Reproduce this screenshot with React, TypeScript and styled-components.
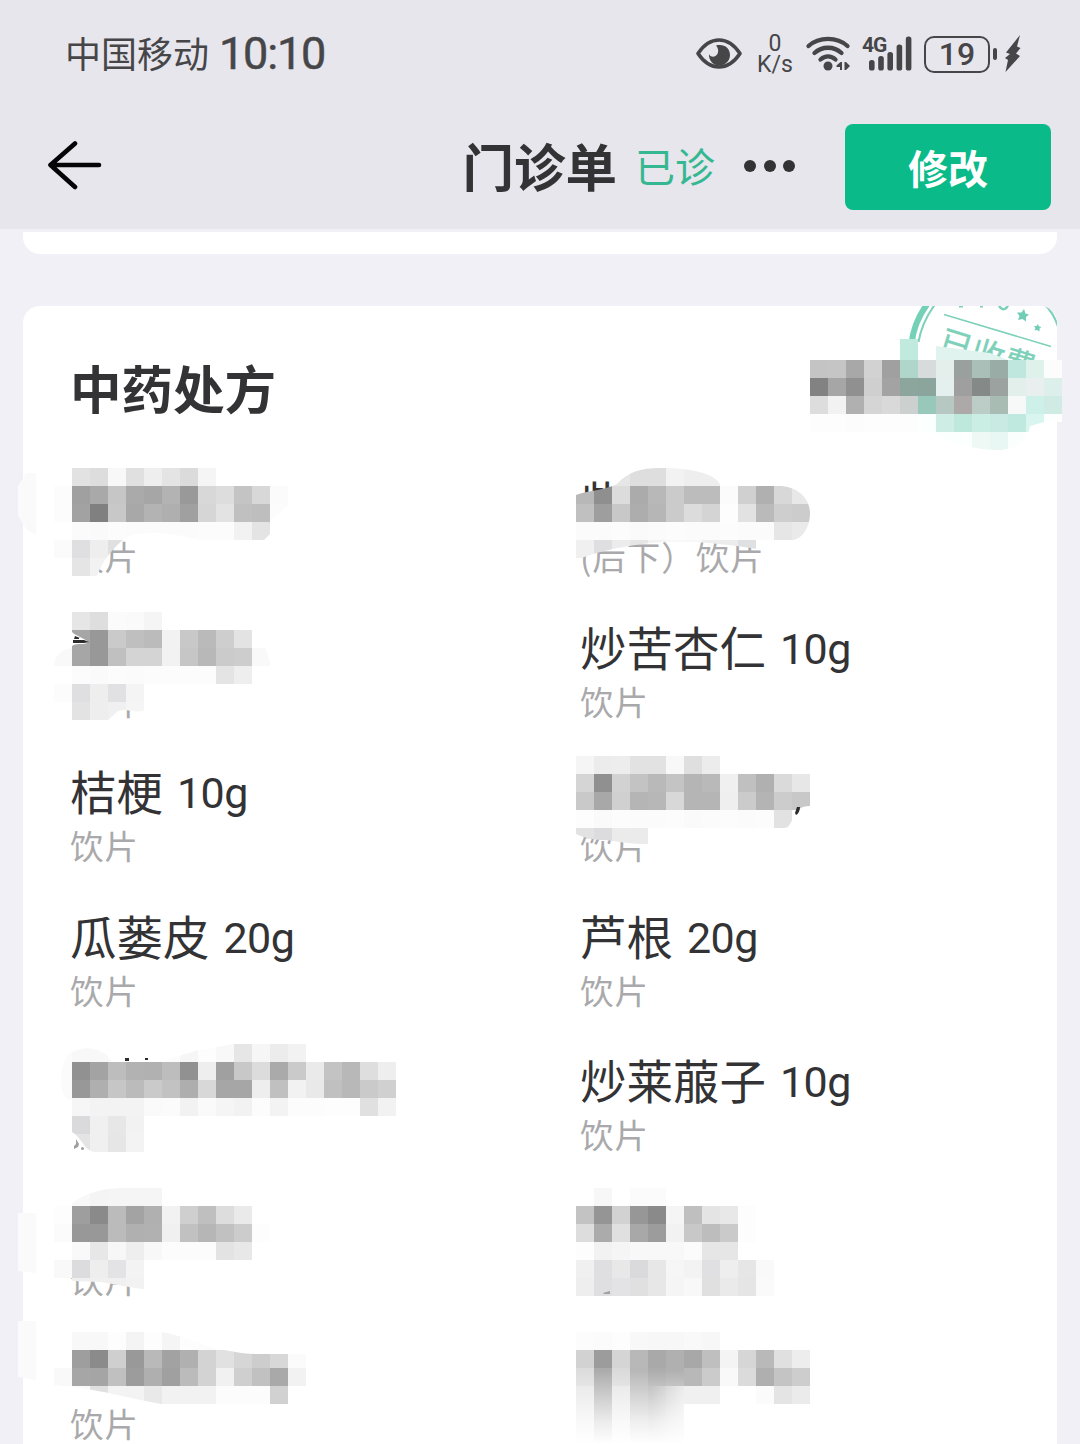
import styled, { createGlobalStyle } from 'styled-components';

type Herb = {
    name?: string;
    dose?: string;
    form?: string;
};

type Patch = {
    id: string;
    x: number;
    y: number;
    // one string per row, grey levels or full colours, "." leaves a hole
    rows: string[];
    clip?: string;
};

const CELL = 18;

const herbs: Herb[] = [
    { form: '饮片' },
    { name: '柴', form: '(后下）饮片' },
    { form: '饮片' },
    { name: '炒苦杏仁', dose: '10g', form: '饮片' },
    { name: '桔梗', dose: '10g', form: '饮片' },
    { form: '饮片' },
    { name: '瓜蒌皮', dose: '20g', form: '饮片' },
    { name: '芦根', dose: '20g', form: '饮片' },
    {},
    { name: '炒莱菔子', dose: '10g', form: '饮片' },
    { form: '饮片' },
    {},
    { form: '饮片' },
    {},
];

const patches: Patch[] = [
    {
        id: 'doctor',
        x: 810,
        y: 360,
        rows: [
            'c4 c5 a8 d2 a0 b0d6cb d8dbdb e4efec 9aa09d a9bfb7 9aaca6 c0e7dd dff1eb fc',
            '82 a6 90 cf a3 8da69d 8ca59c e4f0ed 9f 858a88 9ba29f e3efeb e9eeee ddefeb',
            'dd f2 b0 d5 d9 ccd0ce 98c8b9 b7c8c2 ada9a9 bccdc7 a8bcb4 f7f8f8 cdf1e8 d0ebe4',
            'fd fd fc fd fd fd fbfffd ceeee5 bfe8dd caede4 c8eae2 bfe8df d8f5ef fdfffe',
            '. . . . . . . fbfffd fbfffd eef9f5 e8f7f3 fafffd . .',
        ],
        clip: 'M810 360H1062V422H1044L1030 426C1028 440 1018 450 996 450C970 449 950 443 936 432H810Z',
    },
    {
        id: 'a1',
        x: 54,
        y: 468,
        rows: [
            '. e2 dd f8 e0 ee e4 db f5',
            'fc a0 a9 c6 aa a6 b3 99 d8 dd c4 d8 fb',
            'fc a2 80 c8 a8 b3 af a0 d6 e3 c0 be fc',
            '. fb fa fc fb fb fb fb fc fc f2 e4',
            'fb dfdfe1 ee e0',
            '. e5 f2',
        ],
        clip: 'M54 468H288V506L270 520V534L264 540H200C170 532 145 531 128 536C112 548 102 562 97 576H54Z',
    },
    {
        id: 'b1',
        x: 576,
        y: 468,
        rows: [
            '. . e6 de de f2 ee ee',
            'b8 8f dc ab b8 cb bc bc fb d0 b0 d8 e8',
            'c0 9e c8 ad b6 cb dc d4 fd e2 ba ce cc',
            'fb fb fc fa fb fc fb fb fc fb fb e6 ea',
            'f0 dfdfe1 ec e6 f3 f8 f8 ee ec dfe0e2',
        ],
        clip: 'M576 495C590 490 606 490 617 484C628 472 640 468 660 468C690 468 716 473 721 486H782C800 488 810 500 810 513C810 530 800 540 792 540H757V549C730 545 700 541 665 542C640 543 600 550 576 560Z',
    },
    {
        id: 'a2',
        x: 54,
        y: 612,
        rows: [
            '. e6 de fb fa f5',
            '. a6 98 ca bf bb f2 c8 ba ce e3',
            'f9 a6 98 c0 d4 d4 f2 c6 b8 cb cd f9',
            '. fc fa fc fb fc fc fc fc e4 ee',
            'fc dfdfe1 ee e1e1e3 f4',
            '. e3 ee f0 f5',
        ],
        clip: 'M72 612H252V648H266L271 666H252V690H144V711C130 713 128 708 118 711L108 720H72V706H54V666C54 656 62 649 72 648V646C78 642 84 646 88 642C84 638 76 636 72 632Z',
    },
    {
        id: 'b3',
        x: 576,
        y: 756,
        rows: [
            'f5 ec ed e2 e2 f8 df ec',
            'd5 90 d2 c3 b9 c4 b5 b9 f0 c0 b0 da e7',
            'c9 a8 d0 b5 b7 d8 b5 b5 ef cb b4 cc c8',
            'fd fa fc fb fb fc fa fb fc fb fc e2 .',
            'e2 dcdcde eb eb',
        ],
        clip: 'M576 756H720V774H810V806C800 806 797 810 793 818C790 825 788 828 784 828H648V844C630 844 620 842 606 840C594 840 585 838 576 834Z',
    },
    {
        id: 'a5',
        x: 72,
        y: 1044,
        rows: [
            'f8 f8 f8 . . fc f6 fd f8 e6 f6 ec f2',
            '91 a3 bd b2 b1 bd 91 ee a0 c8 dc aa ca ea c3 b8 de ee',
            '98 af c6 bb ca c2 ae d8 a6 a6 ee c0 f2 e9 c0 b8 ca d0',
            'f6 f3 f3 f3 fa fb f2 fa f5 f2 fc f3 fc fc fd fd e0 f2',
            'dadadc f0 e7 f2',
            'e4 f0 e6 f3',
        ],
        clip: 'M72 1052C84 1046 102 1046 112 1062H160L198 1050L234 1044H306V1062H396V1116H144V1152H94C84 1150 82 1138 72 1132Z',
    },
    {
        id: 'a6',
        x: 54,
        y: 1188,
        rows: [
            '. f8 f4 f5 f5 f5',
            'fd 9e 8a bb a3 b0 f2 cf bf dd ea',
            'fb 98 98 bb b0 b1 f0 c1 b6 c1 cc fd',
            '. f9 e7 f7 ee f8 fc fc fc e3 e8',
            'f9 dcdcde ee e3e3e5 f3',
            '. ef f0 f0 f2',
        ],
        clip: 'M54 1206H72V1203C90 1191 105 1188 126 1188H162V1206H270V1260H144V1289C130 1288 115 1284 100 1282L72 1281V1278H54Z',
    },
    {
        id: 'b6',
        x: 576,
        y: 1188,
        rows: [
            '. f7 . fb fb',
            'c3 95 d2 97 8a f5 bf e4 e8 fd',
            'dd ab e0 a8 9c f2 c8 bd ca fd',
            'fd f2 f5 f8 f8 f8 fb e6 e6 .',
            'f0 dfdfe2 e8 dadadc e7 f6 f3 e0e0e3 ee e6 f9',
            'ee dfdfe2 e3e3e6 e0 e7 f5 f8 e0 ea e5 fa',
        ],
    },
    {
        id: 'a7',
        x: 54,
        y: 1332,
        rows: [
            '. f8 f8 fd f4 fd f5 fd fc',
            '. 9e 8b cf 99 b9 a2 b0 d3 e1 d6 cd d8 fb',
            'f9 a6 a5 c0 9c af a0 bb d3 f1 cf c1 a9 f2',
            '. fa e0 f3 f3 e9 f2 f2 f2 fc fc fc d1 .',
        ],
        clip: 'M54 1332H162C185 1336 198 1344 214 1348C228 1350 238 1354 258 1354H306V1386H288V1404H162C135 1400 112 1392 72 1387L54 1385Z',
    },
    {
        id: 'b7',
        x: 576,
        y: 1332,
        rows: [
            'fc fb fd f8 f7 f7 f9 f7',
            'd2 9c d5 b8 a9 b0 a8 bf f4 d6 b9 e0 ed',
            'dc ab da b7 ac b0 b8 cb f9 db af c4 cd',
            '. . . . . . f0 f0 . . fb e4 eb',
        ],
    },
];

// the last block is dragged downwards until it fades out
const smear = ['e4', 'ab', 'e4', 'b7', 'b0', 'b6'];

const toColour = (value: string) =>
    value.length === 2 ? `#${value}${value}${value}` : `#${value}`;

const Mosaic = () => (
    <MosaicLayer viewBox="0 0 1080 1444" aria-hidden="true">
        <defs>
            {patches
                .filter((patch) => patch.clip)
                .map((patch) => (
                    <clipPath id={`clip-${patch.id}`} key={patch.id}>
                        <path d={patch.clip} />
                    </clipPath>
                ))}
            <linearGradient id="fade" x1="0" y1="0" x2="0" y2="1">
                <stop offset="0" stopColor="#fff" stopOpacity="0" />
                <stop offset="0.3" stopColor="#fff" stopOpacity="0.35" />
                <stop offset="0.7" stopColor="#fff" stopOpacity="0.78" />
                <stop offset="1" stopColor="#fff" />
            </linearGradient>
            <linearGradient id="side">
                <stop offset="0" stopColor="#fff" stopOpacity="0" />
                <stop offset="1" stopColor="#fff" stopOpacity="0.65" />
            </linearGradient>
        </defs>

        <path d="M18 486L26 473H36V535L27 530L18 516Z" fill="#fafafb" />
        <path d="M18 1213H36V1273L18 1271Z" fill="#fafafb" />
        <path d="M18 1321H36V1380L18 1377Z" fill="#fafafb" />
        <path
            d="M62 1090C58 1070 66 1054 72 1052V1100C66 1100 64 1096 62 1090Z"
            fill="#fbfbfb"
        />

        <rect x="900" y="339" width="18" height="21" fill="#c1eadf" />
        <path d="M936 346L990 353L1008 360H936Z" fill="#e1f3ee" />

        {patches.map((patch) => (
            <g
                key={patch.id}
                clipPath={patch.clip ? `url(#clip-${patch.id})` : undefined}
            >
                {patch.rows.map((row, r) =>
                    row.split(' ').map((value, c) =>
                        value === '.' ? null : (
                            <rect
                                key={`${r}-${c}`}
                                x={patch.x + c * CELL}
                                y={patch.y + r * CELL}
                                width={CELL}
                                height={CELL}
                                fill={toColour(value)}
                                shapeRendering="crispEdges"
                            />
                        ),
                    ),
                )}
            </g>
        ))}

        {smear.map((value, index) => (
            <rect
                key={index}
                x={576 + index * CELL}
                y={1386}
                width={CELL}
                height={58}
                fill={toColour(value)}
            />
        ))}
        <rect x="576" y="1370" width="108" height="74" fill="url(#fade)" />
        <rect x="652" y="1386" width="32" height="58" fill="url(#side)" />

        {/* strokes left uncovered at the patch edges */}
        <g fill="#2b2b2b">
            <path d="M75 636L80 638H79V639H74ZM73 640H84L89 642L84 643H73Z" />
            <path d="M797 807H800C800 811 798 814 796 815L795 813Z" />
            <rect x="125" y="1058" width="4" height="3" />
            <rect x="145" y="1058" width="3" height="2" />
        </g>
        <g fill="#a0a0a2">
            <path d="M76 1139L79 1144L78 1147L74 1149V1146L76 1144Z" />
            <circle cx="82.500" cy="1148.500" r="1.500" />
            <path d="M603 1293L610 1291V1294L604 1294Z" />
        </g>
    </MosaicLayer>
);

const BackIcon = () => (
    <svg width="56" height="50" viewBox="47 140 56 50" fill="none">
        <path
            d="M75 143.500L50.500 165L75 187M50.500 165H99"
            stroke="#050507"
            strokeWidth="4.600"
            strokeLinecap="round"
            strokeLinejoin="round"
        />
    </svg>
);

const EyeIcon = () => (
    <svg width="46" height="34" viewBox="696 37 46 34">
        <path
            d="M698 53.500C703 46 710 40 719 40C728 40 735 46 740 53.500C735 61 728 67 719 67C710 67 703 61 698 53.500Z"
            fill="none"
            stroke="#464649"
            strokeWidth="3.600"
            strokeLinejoin="round"
        />
        <path
            d="M716 45.500C724 43.500 730 48 730 55C730 61 725 65.500 719 65.500C713 65.500 708.500 60 709 54C710 56.500 713 57.500 715.500 56C719 54 719 48.500 716 45.500Z"
            fill="#464649"
        />
    </svg>
);

const WifiIcon = () => (
    <svg width="46" height="36" viewBox="805 36 46 36">
        <g
            fill="none"
            stroke="#464649"
            strokeWidth="4.300"
            strokeLinecap="round"
        >
            <path d="M808.500 46C819 36.500 837 36.500 847.500 46" />
            <path d="M814.500 53C822 46 834 46 841.500 53" />
            <path d="M820.500 59.500C825 55.500 831 55.500 835.500 59.500" />
        </g>
        <circle cx="828" cy="66" r="4.500" fill="#464649" />
        <path
            d="M842 62V70H840V67H836.500V65.500L840.500 62ZM844.500 62H846L850 66L846 70H844.500Z"
            fill="#464649"
        />
    </svg>
);

const SignalIcon = () => (
    <svg width="44" height="36" viewBox="869 36 44 36">
        {[60, 56, 52, 44.5, 36.5].map((top, index) => (
            <rect
                key={top}
                x={869 + index * 9.2}
                y={top}
                width="5.600"
                height={70.5 - top}
                rx="2.600"
                fill="#464649"
            />
        ))}
    </svg>
);

const BoltIcon = () => (
    <svg width="17" height="38" viewBox="1004 35 17 38">
        <path
            d="M1020 35L1006 52.500L1010 54L1005 58L1008 60L1005.500 72L1020 56L1016 53.500L1020.500 48L1017 46.500Z"
            fill="#464649"
        />
    </svg>
);

const Stamp = () => (
    <StampSvg viewBox="897 306 160 150">
        <g fill="none" stroke="#7dd0b9">
            <path
                d="M911.500 344C913 329 919 315 928 303"
                stroke="#74d0b7"
                strokeWidth="6"
            />
            <path d="M918.500 342C921 327 927 315 936 303" strokeWidth="2" />
            <path d="M1043 303C1049 308 1054 315 1058 326" strokeWidth="2.200" />
            <path d="M944 314.500L1051 346.500" strokeWidth="1.500" />
            <path d="M959 306.500H963M980 306.500H983" strokeWidth="2" />
            <path d="M999 305C1001 310.500 1006 310.500 1008 305" strokeWidth="2.500" />
        </g>
        <g fill="#6fceb4">
            <path d="M1024 309L1025.500 313.500L1029 314.500L1026 317L1026 321.500L1022.500 319L1018 320L1019.500 316L1017 312.500L1021.500 312.500Z" />
            <path d="M1038 324L1039 326.500L1041.500 327L1039.500 328.500L1039.500 331.500L1037 330L1034.500 330.500L1035.500 328L1034 326L1036.500 326Z" />
        </g>
        <StampText x="937" y="352" transform="rotate(17 937 352)">
            已收费
        </StampText>
    </StampSvg>
);

export default function App() {
    return (
        <Screen>
            <GlobalStyle />
            <StatusBar>
                <Carrier>中国移动</Carrier>
                <Clock>10:10</Clock>
                <StatusIcons>
                    <EyeIcon />
                    <Speed>
                        <span>0</span>
                        <span>K/s</span>
                    </Speed>
                    <WifiIcon />
                    <Signal>
                        <Network>4G</Network>
                        <SignalIcon />
                    </Signal>
                    <Battery>19</Battery>
                    <BatteryTip />
                    <BoltIcon />
                </StatusIcons>
            </StatusBar>
            <Header>
                <BackButton aria-label="返回">
                    <BackIcon />
                </BackButton>
                <Title>门诊单</Title>
                <VisitState>已诊</VisitState>
                <MoreButton aria-label="更多">
                    <Dot />
                    <Dot />
                    <Dot />
                </MoreButton>
                <EditButton>修改</EditButton>
            </Header>
            <PreviousCard />
            <Card>
                <Stamp />
                <CardTitle>中药处方</CardTitle>
                <HerbGrid>
                    {herbs.map((herb, index) => (
                        <HerbItem key={index}>
                            <HerbName>
                                {herb.name}
                                {herb.dose && <Dose>{herb.dose}</Dose>}
                            </HerbName>
                            <HerbForm>{herb.form}</HerbForm>
                        </HerbItem>
                    ))}
                </HerbGrid>
            </Card>
            <Mosaic />
        </Screen>
    );
}

const GlobalStyle = createGlobalStyle`
    * {
        box-sizing: border-box;
    }
    body {
        margin: 0;
        background: #f1f0f6;
    }
`;

const Screen = styled.div`
    position: relative;
    width: 1080px;
    height: 1444px;
    overflow: hidden;
    background: #f1f0f6;
    color: #333335;
    font-family: 'Noto Sans CJK SC', sans-serif;
`;

const StatusBar = styled.div`
    display: flex;
    align-items: center;
    height: 108px;
    padding: 0 59px 0 65px;
    background: #e7e6ec;
    color: #464649;
`;

const Carrier = styled.span`
    padding-bottom: 4px;
    font-size: 36px;
    line-height: 44px;
`;

const Clock = styled.span`
    margin-left: 10px;
    font-family: Roboto, sans-serif;
    font-size: 45px;
    line-height: 50px;
    letter-spacing: -1.2px;
    -webkit-text-stroke: 0.5px #464649;
`;

const StatusIcons = styled.div`
    display: flex;
    align-items: center;
    height: 40px;
    margin-left: auto;
`;

const Speed = styled.div`
    display: flex;
    flex-direction: column;
    align-items: center;
    width: 36px;
    margin: 0 12px 0 15px;
    font-family: Roboto, sans-serif;
    font-size: 23px;
    line-height: 21.5px;
`;

const Signal = styled.div`
    position: relative;
    display: flex;
    margin-left: 18px;
`;

const Network = styled.span`
    position: absolute;
    top: -2px;
    left: -7px;
    font-family: Roboto, sans-serif;
    font-size: 21px;
    font-weight: 700;
    line-height: 22px;
    letter-spacing: -1px;
`;

const Battery = styled.div`
    width: 66px;
    height: 37px;
    margin-left: 11px;
    border: 2.5px solid #464649;
    border-radius: 10px;
    font-family: Roboto, sans-serif;
    font-size: 32px;
    font-weight: 500;
    line-height: 32px;
    text-align: center;
`;

const BatteryTip = styled.div`
    width: 4px;
    height: 12px;
    margin: 0 7px 0 3px;
    border-radius: 2px;
    background: #464649;
`;

const Header = styled.header`
    display: flex;
    align-items: center;
    height: 121px;
    padding: 0 29px 3px 47px;
    background: #e7e6ec;
`;

const BackButton = styled.button`
    display: flex;
    margin: 0 auto 0 0;
    padding: 0 0 4px;
    border: none;
    background: none;
`;

const Title = styled.h1`
    margin: 0;
    padding-bottom: 5px;
    font-size: 51.5px;
    font-weight: 700;
    line-height: 60px;
`;

const VisitState = styled.span`
    margin-left: 18px;
    padding-bottom: 4px;
    color: #35b892;
    font-size: 40px;
    line-height: 50px;
`;

const MoreButton = styled.button`
    display: flex;
    gap: 7.5px;
    margin: 0 50px 0 29px;
    padding: 0 0 2px;
    border: none;
    background: none;
`;

const Dot = styled.span`
    width: 12px;
    height: 12px;
    border-radius: 50%;
    background: #333335;
`;

const EditButton = styled.button`
    width: 206px;
    height: 86px;
    padding: 0;
    border: none;
    border-radius: 8px;
    background: #0abb89;
    color: #fff;
    font-family: inherit;
    font-size: 40px;
    font-weight: 700;
    line-height: 50px;
`;

const PreviousCard = styled.div`
    height: 22px;
    margin: 3px 23px 0;
    border-radius: 0 0 17px 17px;
    background: #fff;
`;

const Card = styled.section`
    position: relative;
    height: 1160px;
    margin: 52px 23px 0;
    padding: 46px 0 0 47px;
    overflow: hidden;
    border-radius: 17px 17px 0 0;
    background: #fff;
`;

const StampSvg = styled.svg`
    position: absolute;
    top: 0;
    right: 0;
    width: 160px;
    height: 150px;
`;

const StampText = styled.text`
    fill: #7dd0b9;
    stroke: #7dd0b9;
    stroke-width: 0.4px;
    font-size: 33px;
`;

const CardTitle = styled.h2`
    margin: 0;
    font-size: 51.5px;
    font-weight: 700;
    line-height: 70px;
`;

const HerbGrid = styled.div`
    display: grid;
    grid-template-columns: 510px 1fr;
    grid-auto-rows: 144.5px;
    margin-top: 51px;
`;

const HerbItem = styled.div`
    display: flex;
    flex-direction: column;
`;

const HerbName = styled.div`
    height: 62px;
    font-size: 46.5px;
    line-height: 56px;
`;

const Dose = styled.span`
    margin-left: 14px;
    font-family: Roboto, sans-serif;
    font-size: 43px;
    line-height: 1;
    letter-spacing: -0.6px;
    vertical-align: 2px;
`;

const HerbForm = styled.div`
    height: 44px;
    color: #a9a9ab;
    font-size: 33.5px;
    line-height: 41px;
    letter-spacing: 1px;
`;

const MosaicLayer = styled.svg`
    position: absolute;
    inset: 0;
    width: 1080px;
    height: 1444px;
    pointer-events: none;
`;
